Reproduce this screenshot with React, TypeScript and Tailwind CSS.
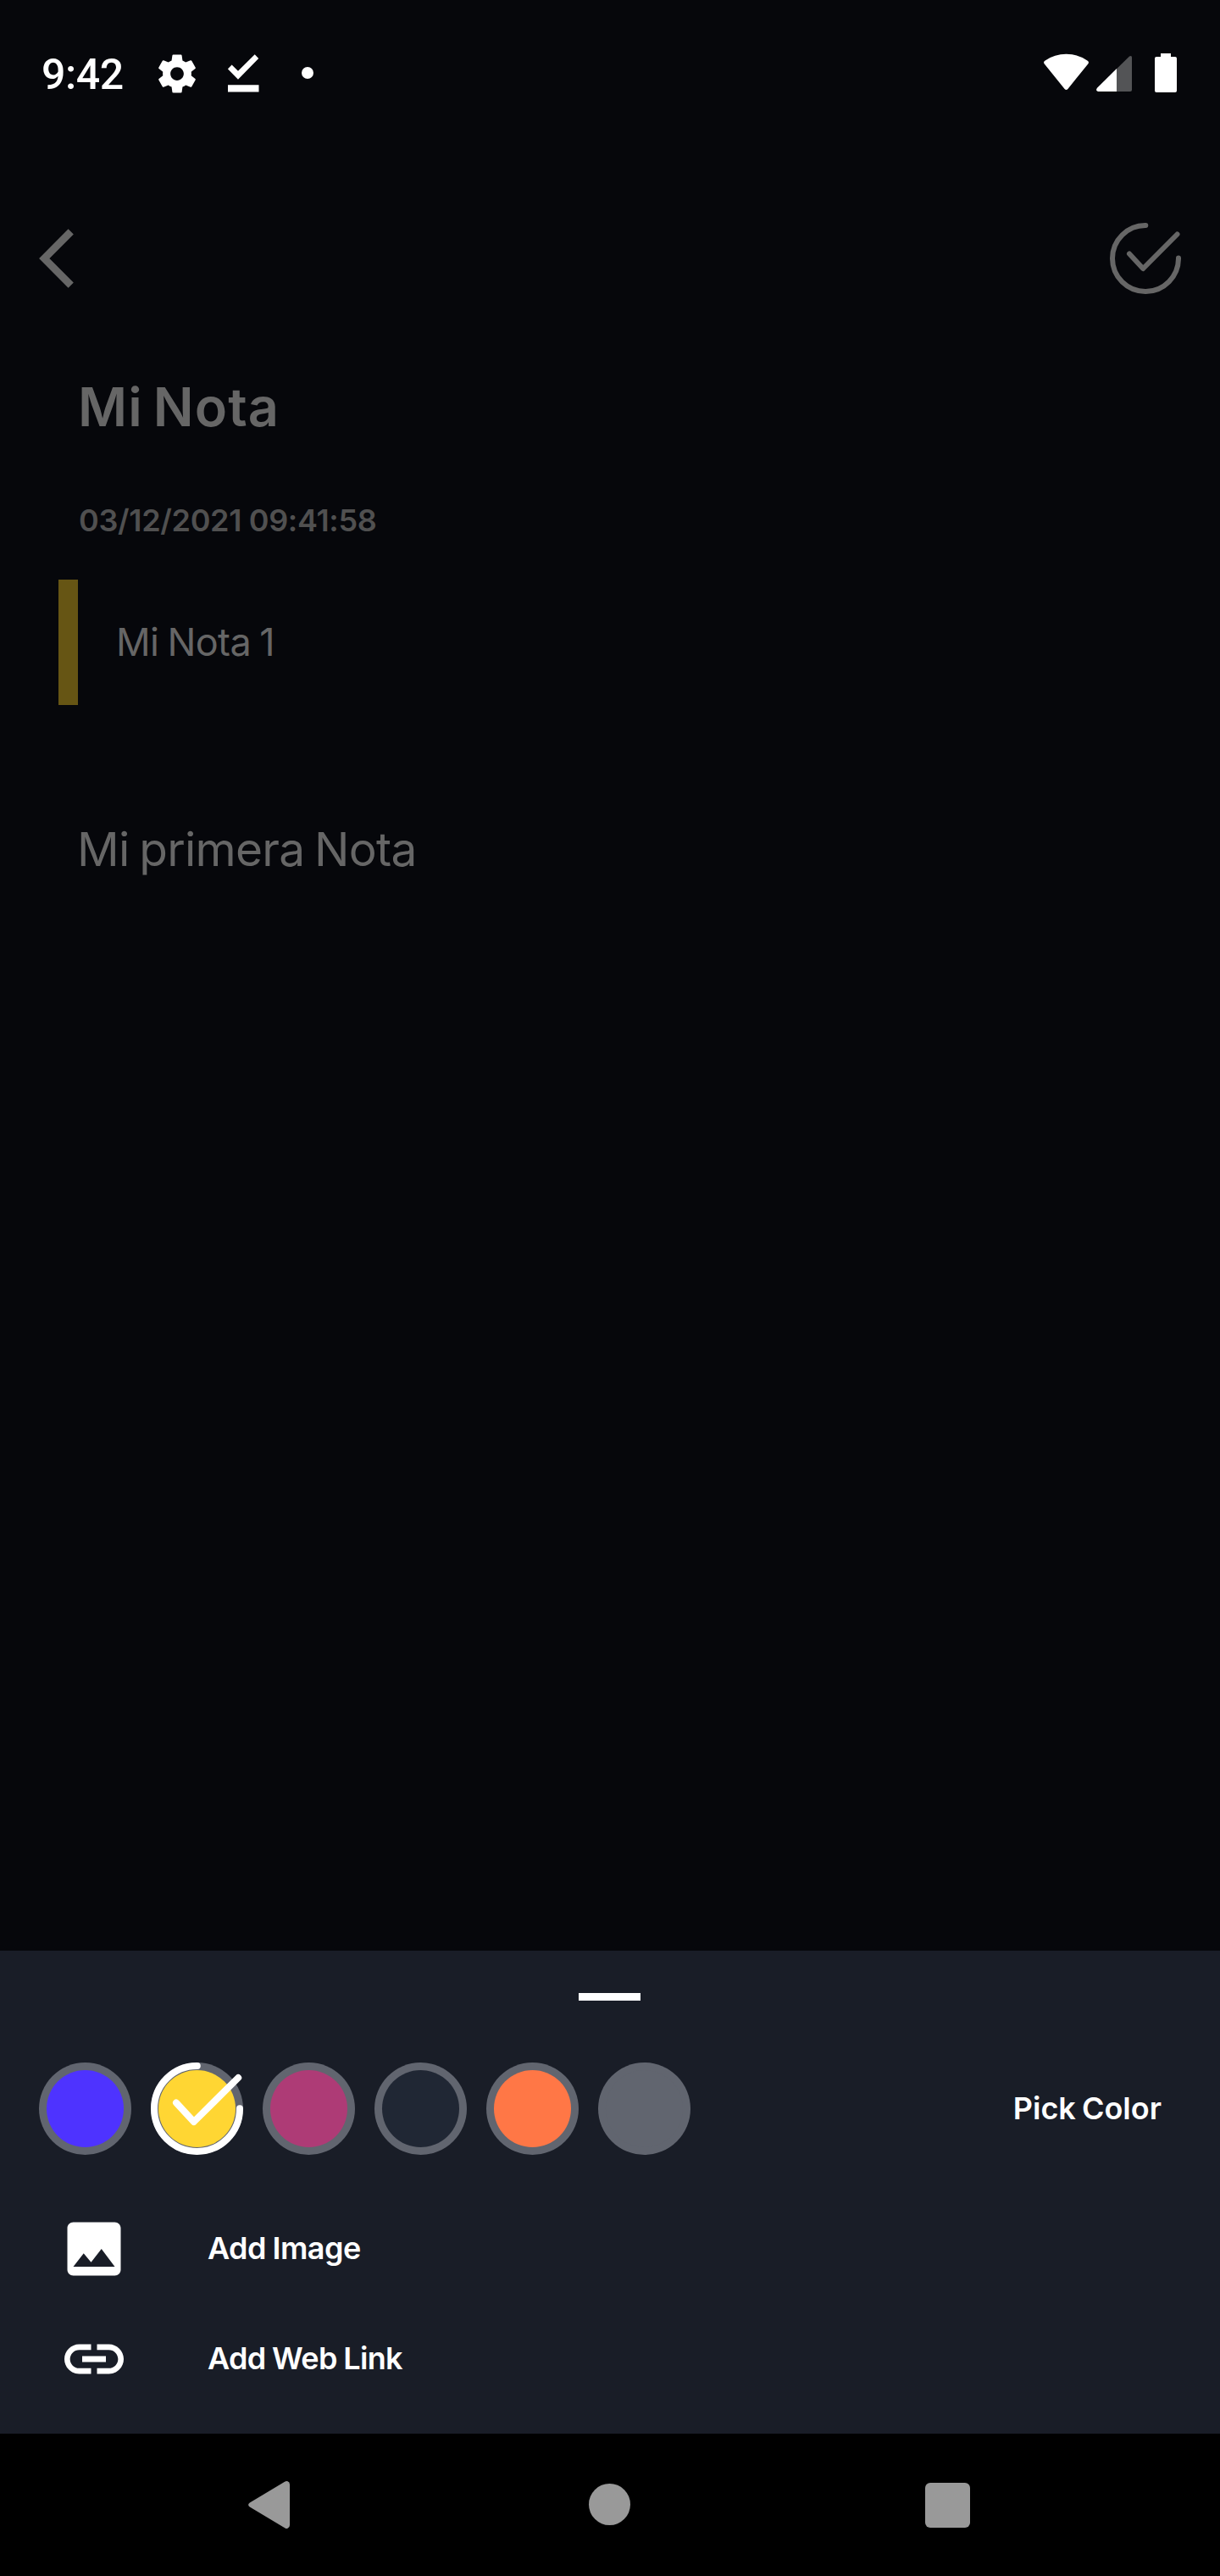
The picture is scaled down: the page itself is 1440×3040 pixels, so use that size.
import type { ReactNode } from 'react';
import { MdImage, MdLink } from 'react-icons/md';

const swatches = [
  { color: 'bg-[#4e33ff]', selected: false },
  { color: 'bg-[#ffd633]', selected: true },
  { color: 'bg-[#ae3b76]', selected: false },
  { color: 'bg-[#202734]', selected: false },
  { color: 'bg-[#ff7746]', selected: false },
  { color: 'bg-[#61656f]', selected: false },
];

function StatusBar() {
  return (
    <div className="flex h-[174px] shrink-0 items-center justify-between pl-[49px] pr-[51px] text-white">
      <div className="flex items-center">
        <span className="mt-[2px] w-[133px] font-['Roboto',sans-serif] text-[50px] font-medium leading-[60px] tracking-[-0.4px]">9:42</span>
        <svg className="mb-[1px] size-[54px]" viewBox="0 0 24 24" fill="currentColor">
          <path d="M19.43 12.98c.04-.32.07-.64.07-.98s-.03-.66-.07-.98l2.11-1.65c.19-.15.24-.42.12-.64l-2-3.46c-.12-.22-.39-.3-.61-.22l-2.49 1c-.52-.4-1.08-.73-1.69-.98l-.38-2.65C14.46 2.18 14.25 2 14 2h-4c-.25 0-.46.18-.49.42l-.38 2.65c-.61.25-1.17.59-1.69.98l-2.49-1c-.23-.09-.49 0-.61.22l-2 3.46c-.13.22-.07.49.12.64l2.11 1.65c-.04.32-.07.65-.07.98s.03.66.07.98l-2.11 1.65c-.19.15-.24.42-.12.64l2 3.46c.12.22.39.3.61.22l2.49-1c.52.4 1.08.73 1.69.98l.38 2.65c.03.24.24.42.49.42h4c.25 0 .46-.18.49-.42l.38-2.65c.61-.25 1.17-.59 1.69-.98l2.49 1c.23.09.49 0 .61-.22l2-3.46c.12-.22.07-.49-.12-.64l-2.11-1.65zM12 15.5c-1.93 0-3.5-1.57-3.5-3.5s1.57-3.5 3.5-3.5 3.5 1.57 3.5 3.5-1.57 3.5-3.5 3.5z" />
        </svg>
        <svg className="ml-[33px] h-[60px] w-[37px]" viewBox="269 57 37 60" fill="currentColor">
          <path d="M300.7 64.2L305.2 69.1L281 93.8L268.9 81.4L273.6 76.6L281 83.8ZM268.7 100.3h36.8v8.3h-36.8z" />
        </svg>
        <span className="mb-[2px] ml-[50px] size-[14px] rounded-full bg-white" />
      </div>
      <svg className="h-[60px] w-[157px]" viewBox="1232 57 157 60" fill="currentColor">
        <path d="M1233 75.8Q1230.8 73.2 1233.6 71.4Q1244.8 63.7 1258.5 63.7Q1272.2 63.7 1283.4 71.4Q1286.2 73.2 1284 75.8L1260.4 104.9Q1258.5 107 1256.6 104.9Z" />
        <path d="M1318 81.2L1333 66.6Q1336 65 1336 68V106Q1336 108 1334 108H1318Z" fill="#535456" />
        <path d="M1318 81L1295 103.8Q1292.7 107 1296 108H1318Z" />
        <path d="M1370 63h12v4h5q2 0 2 2v38q0 2-2 2h-22q-2 0-2-2V69q0-2 2-2h5z" />
      </svg>
    </div>
  );
}

function Note() {
  return (
    <main className="flex flex-1 flex-col">
      <header className="flex h-[262px] items-center justify-between pl-[46px] pr-[46px]">
        <svg className="h-[70px] w-[42px]" viewBox="46 270 42 70">
          <path d="M83.7 273.3L52.3 305L83.7 336.6" fill="none" stroke="#666" strokeWidth="8.8" />
        </svg>
        <svg className="size-[84px]" viewBox="1310 263 84 84" fill="none" stroke="#666" strokeWidth="6" strokeLinecap="round" strokeLinejoin="round">
          <path d="M1352.3 266A39 39 0 1 0 1391 304.5M1333 299.5L1349.2 317L1389.5 276.5" />
        </svg>
      </header>
      <h1 className="pl-[92px] text-[63px] font-semibold leading-[88px] tracking-[1.1px] text-[#666] [word-spacing:-5px]">Mi Nota</h1>
      <p className="pl-[93px] pt-5 text-[36px] font-semibold leading-[140px] tracking-[-0.34px] text-[#505050]">03/12/2021 09:41:58</p>
      <div className="ml-[69px] flex h-[148px] items-center border-l-[23px] border-[#665514] pl-[45px]">
        <p className="text-[45px] font-normal leading-[60px] tracking-[-0.6px] text-[#666] [word-spacing:-2px]">Mi Nota 1</p>
      </div>
      <p className="pl-[91px] text-[55px] font-normal leading-[340px] tracking-[-0.75px] text-[#666] [word-spacing:-3px]">Mi primera Nota</p>
    </main>
  );
}

function ActionRow({ icon, children }: { icon: ReactNode; children: ReactNode }) {
  return (
    <button className="flex h-[130px] w-full items-center gap-[92px] pl-[69px] text-left text-white">
      {icon}
      {children}
    </button>
  );
}

function Sheet() {
  return (
    <section className="flex h-[570px] shrink-0 flex-col bg-[#191d27] text-white">
      <div className="ml-[683px] mt-[50px] h-[9px] w-[73px] bg-white" />
      <div className="mt-[73px] flex h-[109px] items-center justify-between pl-[46px] pr-[69px]">
        <div className="flex gap-[23px]">
          {swatches.map(({ color, selected }) => (
            <div key={color} className="relative size-[109px] rounded-full bg-[#61656f] p-[9px]">
              <div className={`size-full rounded-full ${color}`} />
              {selected && (
                <svg className="absolute inset-0 size-full" viewBox="0 0 109 109" fill="none" stroke="#fff" strokeWidth="8" strokeLinecap="round" strokeLinejoin="round">
                  <path d="M54.8 4A50.5 50.5 0 1 0 105 54.3M30 47.5L50.8 70L103.2 18" />
                </svg>
              )}
            </div>
          ))}
        </div>
        <span className="mb-[1px] text-[36px] font-semibold leading-[60px] tracking-[0px] [word-spacing:-2px]">Pick Color</span>
      </div>
      <div className="mt-[46px]">
        <ActionRow icon={<MdImage className="size-[84px]" />}>
          <span className="mb-[3px] text-[36px] font-semibold leading-[60px] tracking-[-0.53px] [word-spacing:-1px]">Add Image</span>
        </ActionRow>
        <ActionRow icon={<MdLink className="size-[84px]" />}>
          <span className="mb-[3px] text-[36px] font-semibold leading-[60px] tracking-[-0.65px] [word-spacing:-1px]">Add Web Link</span>
        </ActionRow>
      </div>
    </section>
  );
}

function NavBar() {
  return (
    <nav className="flex h-[168px] shrink-0 items-center bg-black pl-[293px] text-[#999]">
      <svg className="h-[56px] w-[49px]" viewBox="293 2928 49 56" fill="currentColor">
        <path d="M336.5 2928.6Q338 2927.7 339.5 2928.2Q342 2929 342 2932V2980Q342 2983 339.5 2983.8Q338 2984.3 336.5 2983.4L294.8 2958.6Q291.4 2956 294.8 2953.4Z" />
      </svg>
      <span className="mb-[1px] ml-[353px] size-[49px] rounded-full bg-[#999]" />
      <span className="ml-[347.5px] size-[53px] rounded-[6px] bg-[#999]" />
    </nav>
  );
}

export default function App() {
  return (
    <div className="flex h-[3040px] w-[1440px] flex-col overflow-hidden bg-[#06070b] font-['Inter',sans-serif]">
      <StatusBar />
      <Note />
      <Sheet />
      <NavBar />
    </div>
  );
}
